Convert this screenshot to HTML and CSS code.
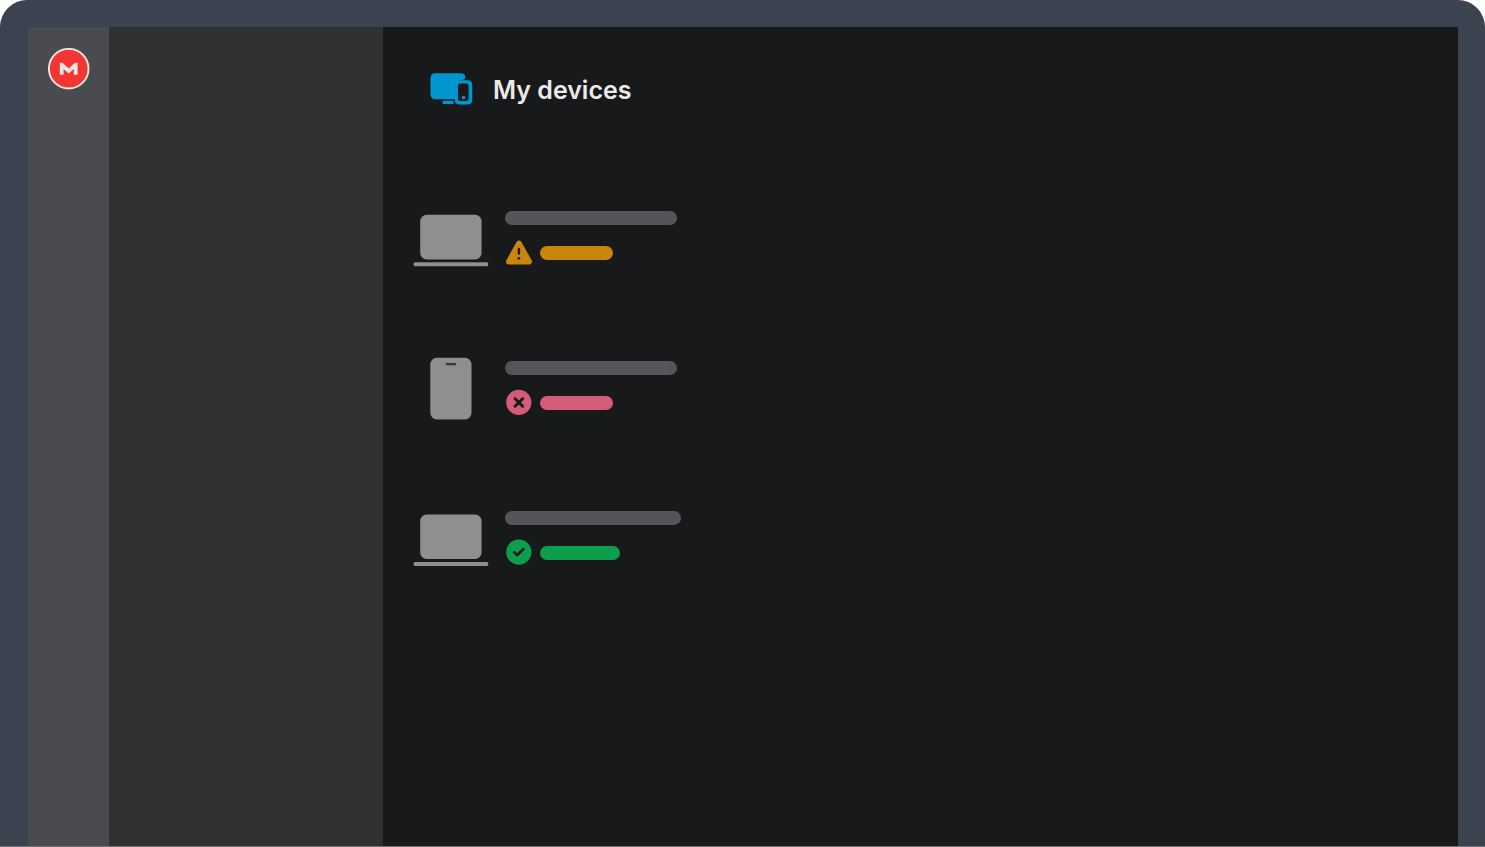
FILE: index.html
```html
<!DOCTYPE html>
<html lang="en">
<head>
<meta charset="utf-8">
<meta name="viewport" content="width=device-width, initial-scale=1">
<title>My devices</title>
<link rel="stylesheet" href="styles.css">
</head>
<body>
<div class="frame">
  <nav class="rail" aria-label="Main">
    <svg class="logo" viewBox="0 0 42 42" role="img" aria-label="Home">
      <circle cx="20.700" cy="20.700" r="19.800" fill="#f53434" stroke="#eeeaea" stroke-width="1.900"/>
      <path d="M11.800 26.800V14.700H14.500L20.700 20.400L26.900 14.700H29.600V26.800H25.800V20.900L20.700 25.500L15.600 20.900V26.800Z" fill="#e9e6e6"/>
    </svg>
  </nav>
  <aside class="panel"></aside>
  <main class="content">
    <header class="title">
      <svg class="title-icon" viewBox="0 0 43 32" aria-hidden="true">
        <path d="M5.500 0.300H31Q34.800 0.300 35.400 4Q35.600 7 30.500 7.300Q25.500 8 25.500 12.300V26.300H5.500Q0.500 26.300 0.500 21.300V5.300Q0.500 0.300 5.500 0.300Z" fill="#0097d0"/>
        <rect x="12.300" y="27.700" width="11.700" height="3.400" rx="1.700" fill="#0097d0"/>
        <path d="M30.500 7.300H37Q42.300 7.300 42.300 12.300V26.500Q42.300 31.500 37.300 31.500H29.700Q24.700 31.500 24.700 26.500V12.300Q24.700 7.300 30.500 7.300Z" fill="#0097d0"/>
        <rect x="28" y="10.500" width="10.600" height="17.500" rx="2" fill="#18191b"/>
        <circle cx="33.500" cy="24.600" r="1.800" fill="#0097d0"/>
      </svg>
      <h1 class="heading">My devices</h1>
    </header>
    <ul class="devices">
      <li class="device">
        <svg class="device-icon" viewBox="0 0 76 64" role="img" aria-label="Laptop">
          <rect x="7.200" y="7.800" width="61.400" height="44.600" rx="6.500" fill="#8e8f91"/>
          <rect x="0.600" y="55.200" width="74.600" height="4" rx="1.500" fill="#8e8f91"/>
        </svg>
        <div class="info">
          <span class="name"></span>
          <div class="status warning">
            <svg class="status-icon" viewBox="0 0 28 28" role="img" aria-label="Warning">
              <path d="M14 4.700L24 22.600H4Z" fill="currentColor" stroke="currentColor" stroke-width="6" stroke-linejoin="round"/>
              <path d="M13.900 10V14.600" stroke="#18191b" stroke-width="2.400" stroke-linecap="round"/>
              <circle cx="13.900" cy="19.300" r="1.400" fill="#18191b"/>
            </svg>
            <span class="pill"></span>
          </div>
        </div>
      </li>
      <li class="device">
        <svg class="device-icon" viewBox="0 0 76 64" role="img" aria-label="Phone">
          <rect x="17.300" y="0.800" width="41.200" height="61.600" rx="6.500" fill="#8e8f91"/>
          <rect x="32.600" y="6" width="10.600" height="2.200" rx="1" fill="#36373a"/>
        </svg>
        <div class="info">
          <span class="name"></span>
          <div class="status error">
            <svg class="status-icon" viewBox="0 0 28 28" role="img" aria-label="Error">
              <circle cx="13.800" cy="13.400" r="12.600" fill="currentColor"/>
              <path d="M10.100 9.700L17.700 17.300M17.700 9.700L10.100 17.300" stroke="#18191b" stroke-width="2.900" stroke-linecap="round"/>
            </svg>
            <span class="pill"></span>
          </div>
        </div>
      </li>
      <li class="device">
        <svg class="device-icon" viewBox="0 0 76 64" role="img" aria-label="Laptop">
          <rect x="7.200" y="7.600" width="61.400" height="44.400" rx="6.500" fill="#8e8f91"/>
          <rect x="0.600" y="55" width="74.600" height="4" rx="1.500" fill="#8e8f91"/>
        </svg>
        <div class="info wide">
          <span class="name"></span>
          <div class="status success">
            <svg class="status-icon" viewBox="0 0 28 28" role="img" aria-label="Up to date">
              <circle cx="13.800" cy="13.200" r="12.600" fill="currentColor"/>
              <path d="M9.200 13.200L12.200 16.200L18.400 10" fill="none" stroke="#18191b" stroke-width="2.500" stroke-linecap="round" stroke-linejoin="round"/>
            </svg>
            <span class="pill"></span>
          </div>
        </div>
      </li>
    </ul>
  </main>
</div>
</body>
</html>
```
FILE: styles.css
```css
* {
  box-sizing: border-box;
}

body {
  margin: 0;
  background: #ffffff;
  font-family: Inter, "Liberation Sans", sans-serif;
}

.frame {
  display: grid;
  grid-template-columns: 81px 274px 1fr;
  min-height: 100vh;
  padding: 27px 27px 0 28px;
  border-bottom: 1px solid #717278;
  border-radius: 27px 27px 0 0;
  background: #3c4350;
}

.rail {
  padding: 21px 0 0 20px;
  background: #4a4b4e;
}

.logo {
  display: block;
  width: 42px;
  height: 42px;
}

.panel {
  background: #303133;
}

.content {
  padding: 46px 30px 0;
  background: #18191b;
}

.title {
  display: flex;
  align-items: flex-start;
  gap: 20px;
  padding-left: 17px;
}

.title-icon {
  width: 43px;
  height: 32px;
}

.heading {
  margin: 0;
  color: #ece9e8;
  font-size: 25px;
  font-weight: 600;
  line-height: 34px;
}

.devices {
  display: flex;
  flex-direction: column;
  gap: 86px;
  margin: 100px 0 0;
  padding: 0;
  list-style: none;
}

.device {
  display: flex;
  gap: 16px;
}

.device-icon {
  width: 76px;
  height: 64px;
}

.info {
  width: 172px;
  padding-top: 4px;
}

.name {
  display: block;
  height: 14px;
  border-radius: 7px;
  background: #545558;
}

.status {
  display: flex;
  align-items: center;
  gap: 7px;
  margin-top: 14px;
}

.status-icon {
  width: 28px;
  height: 28px;
}

.pill {
  width: 73px;
  height: 14px;
  border-radius: 7px;
  background: currentColor;
}

.wide {
  width: 176px;
}

.wide .pill {
  width: 80px;
}

.warning {
  color: #c8860d;
}

.error {
  color: #d45c76;
}

.success {
  color: #0d9e4b;
}
```
